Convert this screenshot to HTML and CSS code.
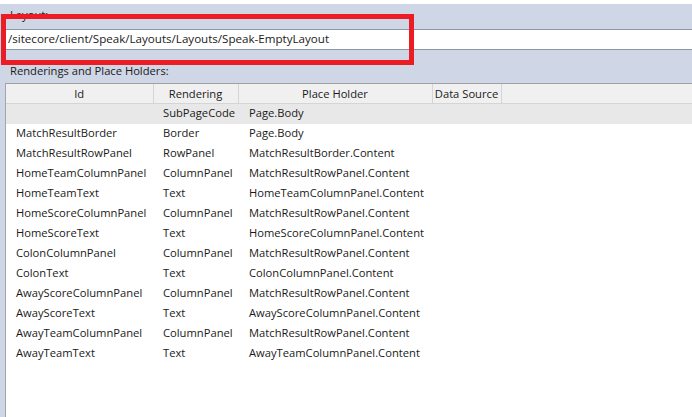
FILE: index.html
```html
<!DOCTYPE html>
<html>
<head>
<meta charset="utf-8">
<link rel="stylesheet" href="styles.css">
</head>
<body>
<div class="top-strip"></div>
<div class="layout-section">
  <div class="label">Layout:</div>
  <div class="path-field">/sitecore/client/Speak/Layouts/Layouts/Speak-EmptyLayout</div>
  <div class="highlight"></div>
</div>
<div class="label renderings-label">Renderings and Place Holders:</div>
<div class="grid-wrap">
  <table class="grid">
    <colgroup>
      <col class="c-id"><col class="c-rend"><col class="c-ph"><col class="c-ds"><col>
    </colgroup>
    <thead>
      <tr><th>Id</th><th>Rendering</th><th>Place Holder</th><th>Data Source</th><th class="filler"></th></tr>
    </thead>
    <tbody>
      <tr class="selected"><td></td><td>SubPageCode</td><td>Page.Body</td><td></td><td></td></tr>
      <tr><td>MatchResultBorder</td><td>Border</td><td>Page.Body</td><td></td><td></td></tr>
      <tr><td>MatchResultRowPanel</td><td>RowPanel</td><td>MatchResultBorder.Content</td><td></td><td></td></tr>
      <tr><td>HomeTeamColumnPanel</td><td>ColumnPanel</td><td>MatchResultRowPanel.Content</td><td></td><td></td></tr>
      <tr><td>HomeTeamText</td><td>Text</td><td>HomeTeamColumnPanel.Content</td><td></td><td></td></tr>
      <tr><td>HomeScoreColumnPanel</td><td>ColumnPanel</td><td>MatchResultRowPanel.Content</td><td></td><td></td></tr>
      <tr><td>HomeScoreText</td><td>Text</td><td>HomeScoreColumnPanel.Content</td><td></td><td></td></tr>
      <tr><td>ColonColumnPanel</td><td>ColumnPanel</td><td>MatchResultRowPanel.Content</td><td></td><td></td></tr>
      <tr><td>ColonText</td><td>Text</td><td>ColonColumnPanel.Content</td><td></td><td></td></tr>
      <tr><td>AwayScoreColumnPanel</td><td>ColumnPanel</td><td>MatchResultRowPanel.Content</td><td></td><td></td></tr>
      <tr><td>AwayScoreText</td><td>Text</td><td>AwayScoreColumnPanel.Content</td><td></td><td></td></tr>
      <tr><td>AwayTeamColumnPanel</td><td>ColumnPanel</td><td>MatchResultRowPanel.Content</td><td></td><td></td></tr>
      <tr><td>AwayTeamText</td><td>Text</td><td>AwayTeamColumnPanel.Content</td><td></td><td></td></tr>
    </tbody>
  </table>
</div>
</body>
</html>
```
FILE: styles.css
```css
html, body {
  margin: 0;
  padding: 0;
  height: 100%;
  overflow: hidden;
}
body {
  background: #cfd6e5;
  font-family: "Open Sans", "Noto Sans", sans-serif;
  font-size: 11.2px;
  color: #1a1a1a;
  display: flex;
  flex-direction: column;
}
.top-strip {
  height: 4px;
  background: #ffffff;
  flex: none;
}
.layout-section {
  position: relative;
  flex: none;
}
.label {
  padding-left: 10px;
  height: 25px;
  line-height: 16px;
  padding-top: 3px;
  box-sizing: border-box;
}
.path-field {
  margin-left: 4px;
  height: 21px;
  box-sizing: border-box;
  background: #ffffff;
  border-top: 1px solid #8d97a8;
  border-bottom: 1px solid #8d97a8;
  padding-left: 4px;
  line-height: 18px;
  font-size: 11.6px;
}
.highlight {
  position: absolute;
  left: 1px;
  top: 10px;
  width: 413px;
  height: 51px;
  box-sizing: border-box;
  border: 5px solid #ec1c24;
}
.renderings-label {
  height: 33px;
  padding-top: 13px;
  line-height: 16px;
  flex: none;
}
.grid-wrap {
  flex: 1;
  margin-left: 5px;
  border-left: 1px solid #9ea6b4;
  border-top: 1px solid #a0a0a0;
  background: #ffffff;
}
.grid {
  border-collapse: collapse;
  table-layout: fixed;
  width: 100%;
}
.c-id { width: 147px; }
.c-rend { width: 85px; }
.c-ph { width: 194px; }
.c-ds { width: 69px; }
.grid th {
  height: 19px;
  padding: 0;
  font-weight: normal;
  text-align: center;
  background: #f0f0f0;
  border-right: 1px solid #d5d5d5;
  border-bottom: 1px solid #d5d5d5;
  white-space: nowrap;
  overflow: hidden;
}
.grid th.filler {
  border-right: none;
}
.grid td {
  height: 20px;
  box-sizing: border-box;
  padding: 0 0 1px 10px;
  line-height: 16px;
  white-space: nowrap;
  overflow: hidden;
}
.grid td:nth-child(3) {
  padding-left: 11px;
}
.grid tr.selected td {
  background: #e8e8e8;
}
```
